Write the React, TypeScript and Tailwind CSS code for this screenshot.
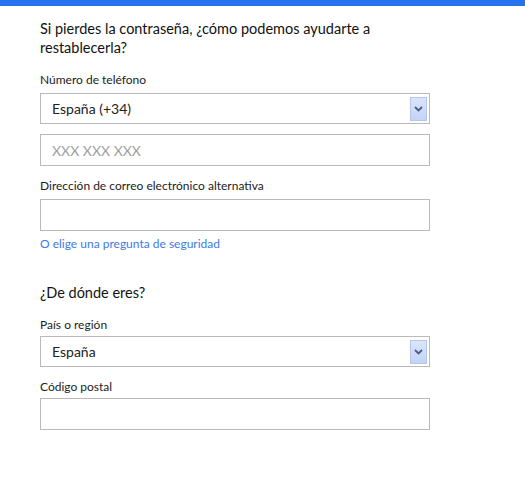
import React from "react";

const font = { fontFamily: 'Lato, "Noto Sans", sans-serif' };

function Arrow() {
  return (
    <div className="w-[17px] h-[24px] border border-[#b4c6ee] bg-gradient-to-b from-[#dbe5fb] to-[#c3d3f6] flex items-center justify-center">
      <svg width="9" height="6" viewBox="0 0 9 6">
        <path d="M1 1 L4.5 4.5 L8 1" fill="none" stroke="#4a5d82" strokeWidth="1.8" />
      </svg>
    </div>
  );
}

function Select({ value }: { value: string }) {
  return (
    <div className="w-[390px] h-[31px] border border-[#bababa] flex items-center justify-between pl-[11px] pr-[2px] text-[14px] text-[#222]">
      <span>{value}</span>
      <Arrow />
    </div>
  );
}

function Input({ placeholder }: { placeholder?: string }) {
  return (
    <div className="w-[390px] h-[32px] border border-[#bababa] flex items-center pl-[11px] text-[14px] text-[#a0a0a0]">
      {placeholder}
    </div>
  );
}

function Label({ children }: { children: React.ReactNode }) {
  return <div className="text-[12px] leading-[16px] text-[#222]">{children}</div>;
}

export default function App() {
  return (
    <div className="w-[525px] h-[477px] bg-white" style={font}>
      <div className="h-[6px] bg-[#2672ec]" />
      <div className="pl-[40px] pt-[13px]">
        <div className="text-[14.5px] leading-[19px] text-[#111]">
          Si pierdes la contraseña, ¿cómo podemos ayudarte a
          <br />
          restablecerla?
        </div>
        <div className="mt-[15px]">
          <Label>Número de teléfono</Label>
        </div>
        <div className="mt-[5px]">
          <Select value="España (+34)" />
        </div>
        <div className="mt-[10px]">
          <Input placeholder="XXX XXX XXX" />
        </div>
        <div className="mt-[12px]">
          <Label>Dirección de correo electrónico alternativa</Label>
        </div>
        <div className="mt-[5px]">
          <Input />
        </div>
        <div className="mt-[5px] text-[12px] leading-[16px] text-[#3d7ae6]">O elige una pregunta de seguridad</div>
        <div className="mt-[31px] text-[14.5px] leading-[19px] text-[#111]">¿De dónde eres?</div>
        <div className="mt-[15px]">
          <Label>País o región</Label>
        </div>
        <div className="mt-[3px]">
          <Select value="España" />
        </div>
        <div className="mt-[12px]">
          <Label>Código postal</Label>
        </div>
        <div className="mt-[3px]">
          <Input />
        </div>
      </div>
    </div>
  );
}
